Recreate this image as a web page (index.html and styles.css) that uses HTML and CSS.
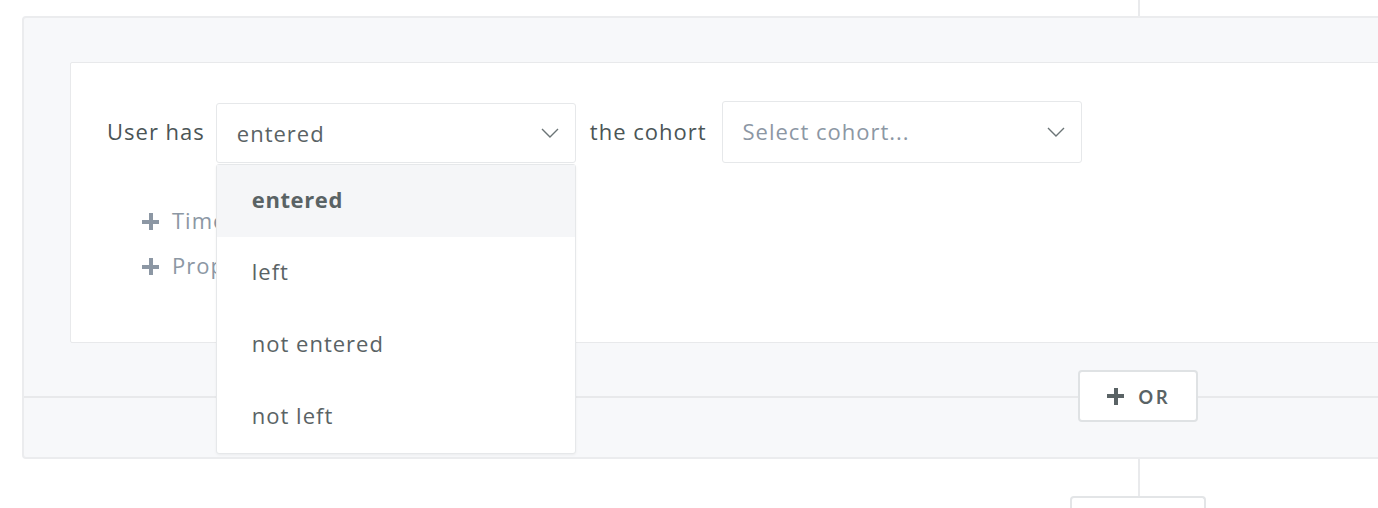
FILE: index.html
```html
<!DOCTYPE html>
<html>
<head>
<meta charset="utf-8">
<link rel="stylesheet" href="styles.css">
</head>
<body>
<div class="connector connector-top"></div>
<div class="group">
  <div class="card">
    <div class="rule-row">
      <span class="label">User has</span>
      <div class="select-wrap">
        <div class="select">
          <span class="value">entered</span>
          <svg class="chev" width="18" height="10" viewBox="0 0 18 10"><path d="M1 1l8 8 8-8" fill="none" stroke="#6b7476" stroke-width="1.4"/></svg>
        </div>
        <ul class="menu">
          <li class="item active">entered</li>
          <li class="item">left</li>
          <li class="item">not entered</li>
          <li class="item">not left</li>
        </ul>
      </div>
      <span class="label label-cohort">the cohort</span>
      <div class="select select-tall">
        <span class="placeholder">Select cohort...</span>
        <svg class="chev" width="18" height="10" viewBox="0 0 18 10"><path d="M1 1l8 8 8-8" fill="none" stroke="#6b7476" stroke-width="1.4"/></svg>
      </div>
    </div>
    <div class="adds">
      <div class="add"><span class="plus"></span><span>Time window</span></div>
      <div class="add"><span class="plus"></span><span>Property filter</span></div>
    </div>
  </div>
  <div class="footer">
    <div class="hline hline-left"></div>
    <button class="or-btn"><span class="plus plus-dark"></span><span class="or-text">OR</span></button>
    <div class="hline hline-right"></div>
  </div>
</div>
<div class="connector connector-bottom"></div>
<div class="next-box"></div>
</body>
</html>
```

FILE: styles.css
```css
* { box-sizing: border-box; }
html, body { margin: 0; padding: 0; background: #fff; overflow: hidden; }
body {
  width: 1378px;
  height: 508px;
  font-family: "Open Sans", "Liberation Sans", sans-serif;
  color: #4b5556;
}
.connector {
  width: 2px;
  background: #e9eaec;
  margin-left: 1138px;
}
.connector-top { height: 16px; }
.connector-bottom { height: 37px; }
.group {
  margin-left: 22px;
  width: 1420px;
  height: 443px;
  background: #f7f8fa;
  border: 2px solid #ebecee;
  border-radius: 4px;
  padding-top: 44px;
}
.card {
  margin-left: 46px;
  height: 281px;
  background: #fff;
  border: 1px solid #e8e9eb;
  border-radius: 2px;
  padding: 38px 0 0 36px;
}
.rule-row {
  display: flex;
  align-items: center;
  height: 62px;
}
.label {
  font-size: 22px;
  letter-spacing: 1px;
  color: #4b5556;
  margin-right: 11px;
  white-space: nowrap;
  margin-top: -3px;
}
.label-cohort { margin-right: 15px; }
.select-wrap { position: relative; margin-right: 14px; }
.select {
  width: 360px;
  height: 60px;
  border: 1px solid #e6e8ea;
  border-radius: 3px;
  background: #fff;
  display: flex;
  align-items: center;
  justify-content: space-between;
  padding: 0 16px 0 20px;
  font-size: 22px;
  letter-spacing: 1px;
}
.select-wrap .select { margin-top: 1px; }
.select-tall { height: 62px; }
.value { color: #5a6365; }
.placeholder { color: #8c97a4; margin-top: -3px; }
.chev { display: block; }
.menu {
  position: absolute;
  top: 62px;
  left: 0;
  width: 360px;
  margin: 0;
  padding: 0;
  list-style: none;
  background: #fff;
  border: 1px solid #e6e8ea;
  border-radius: 3px;
  box-shadow: 0 1px 3px rgba(0,0,0,0.05);
  z-index: 5;
}
.item {
  height: 72px;
  display: flex;
  align-items: center;
  padding-left: 35px;
  padding-bottom: 4px;
  font-size: 22px;
  letter-spacing: 1px;
  color: #5a6365;
}
.item.active {
  background: #f5f6f8;
  font-weight: 700;
  letter-spacing: 0.6px;
}
.adds {
  margin-top: 36px;
  padding-left: 35px;
  display: flex;
  flex-direction: column;
}
.add {
  height: 45px;
  display: flex;
  align-items: center;
  gap: 13px;
  font-size: 22px;
  letter-spacing: 1px;
  color: #8c97a4;
}
.add span:last-child { margin-top: -3px; }
.plus {
  width: 17px;
  height: 17px;
  flex: none;
  background:
    linear-gradient(#8c97a4, #8c97a4) center / 17px 4px no-repeat,
    linear-gradient(#8c97a4, #8c97a4) center / 4px 17px no-repeat;
}
.plus-dark {
  background:
    linear-gradient(#5a6365, #5a6365) center / 17px 4px no-repeat,
    linear-gradient(#5a6365, #5a6365) center / 4px 17px no-repeat;
}
.footer {
  display: flex;
  align-items: center;
  padding-top: 27px;
}
.hline { height: 2px; background: #e8e9eb; }
.hline-left { width: 1054px; margin-top: 1px; }
.hline-right { flex: 1; margin-top: 1px; }
.or-btn {
  width: 120px;
  height: 52px;
  background: #fff;
  border: 2px solid #dfe2e4;
  border-radius: 4px;
  display: flex;
  align-items: center;
  justify-content: center;
  gap: 14px;
  padding: 0 0 0 2px;
  font-family: "Lato", sans-serif;
}
.or-text {
  font-size: 18px;
  font-weight: 700;
  letter-spacing: 3px;
  color: #5a6365;
  margin-top: 2px;
}
.next-box {
  margin-left: 1070px;
  width: 136px;
  height: 20px;
  border: 2px solid #e3e5e7;
  border-bottom: none;
  border-radius: 4px 4px 0 0;
}
```
